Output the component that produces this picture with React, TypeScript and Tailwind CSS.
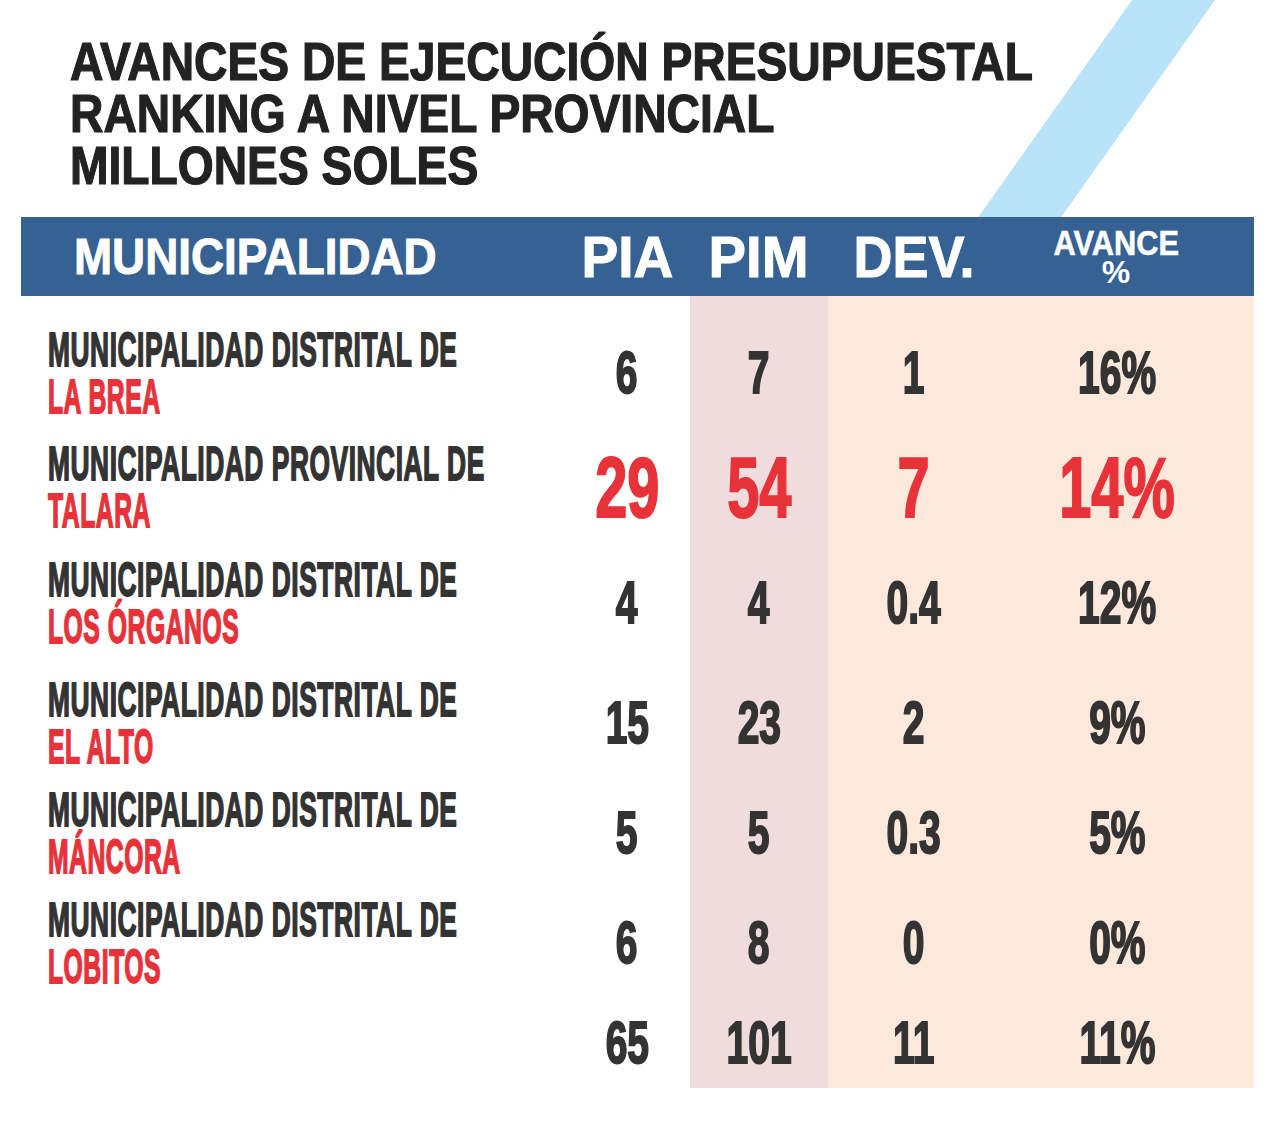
import React from "react";

type Row = {
  top: string;
  name: string;
  pia: string;
  pim: string;
  dev: string;
  av: string;
  big?: boolean;
};

const rows: Row[] = [
  { top: "MUNICIPALIDAD DISTRITAL DE", name: "LA BREA", pia: "6", pim: "7", dev: "1", av: "16%" },
  { top: "MUNICIPALIDAD PROVINCIAL DE", name: "TALARA", pia: "29", pim: "54", dev: "7", av: "14%", big: true },
  { top: "MUNICIPALIDAD DISTRITAL DE", name: "LOS ÓRGANOS", pia: "4", pim: "4", dev: "0.4", av: "12%" },
  { top: "MUNICIPALIDAD DISTRITAL DE", name: "EL ALTO", pia: "15", pim: "23", dev: "2", av: "9%" },
  { top: "MUNICIPALIDAD DISTRITAL DE", name: "MÁNCORA", pia: "5", pim: "5", dev: "0.3", av: "5%" },
  { top: "MUNICIPALIDAD DISTRITAL DE", name: "LOBITOS", pia: "6", pim: "8", dev: "0", av: "0%" },
];

const total = { pia: "65", pim: "101", dev: "11", av: "11%" };

const heights = ["h-[114px]", "h-[114px]", "h-[118px]", "h-[122px]", "h-[98px]", "h-[122px]"];

function Num({ value, big }: { value: string; big?: boolean }) {
  if (big) {
    return (
      <span className="inline-block whitespace-nowrap text-[85px] leading-[85px] font-bold text-[#e8323a] scale-x-[0.68] origin-center [-webkit-text-stroke:2px_currentColor]">
        {value}
      </span>
    );
  }
  return (
    <span className="inline-block whitespace-nowrap text-[60px] leading-[60px] font-bold text-[#333333] scale-x-[0.65] origin-center [-webkit-text-stroke:2px_currentColor]">
      {value}
    </span>
  );
}

function NumCell({ h, value, big }: { h: string; value: string; big?: boolean }) {
  return (
    <div className={`${h} flex items-center justify-center`}>
      <Num value={value} big={big} />
    </div>
  );
}

function NumColumn({
  field,
  bg,
  pad,
}: {
  field: "pia" | "pim" | "dev" | "av";
  bg: string;
  pad?: string;
}) {
  return (
    <div className={`flex flex-col pt-[20px] pb-[6px] ${bg} ${pad ?? ""}`}>
      {rows.map((r, i) => (
        <NumCell key={i} h={heights[i]} value={r[field]} big={r.big} />
      ))}
      <NumCell h="h-[78px]" value={total[field]} />
    </div>
  );
}

export default function App() {
  return (
    <div className="relative w-[1280px] h-[1121px] bg-white overflow-hidden font-['Liberation_Sans',Arial,sans-serif]">
      {/* decorative stripe */}
      <svg
        className="absolute left-0 top-0 z-0"
        width="1280"
        height="260"
        viewBox="0 0 1280 260"
      >
        <polygon points="1132,0 1215,0 1045,240 962,240" fill="#b8e3f8" />
      </svg>

      {/* title */}
      <div className="relative z-10 pl-[70px] pt-[36px]">
        <div className="inline-block whitespace-nowrap origin-top-left scale-x-[0.872] text-[53px] leading-[52px] font-bold text-[#222222] [-webkit-text-stroke:1.2px_currentColor]">
          <div>AVANCES DE EJECUCIÓN PRESUPUESTAL</div>
          <div>RANKING A NIVEL PROVINCIAL</div>
          <div>MILLONES SOLES</div>
        </div>
      </div>

      {/* header bar */}
      <div className="relative z-10 mt-[25px] ml-[21px] w-[1233px] h-[79px] bg-[#356193] grid grid-cols-[543px_126px_138px_172px_254px] items-center text-white font-bold">
        <div className="pl-[53px]">
          <span className="inline-block whitespace-nowrap origin-left scale-x-[0.915] text-[50px] leading-[50px] [-webkit-text-stroke:1px_currentColor]">
            MUNICIPALIDAD
          </span>
        </div>
        <div className="flex justify-center">
          <span className="inline-block whitespace-nowrap origin-center scale-x-[0.95] text-[58px] leading-[58px] [-webkit-text-stroke:1px_currentColor]">
            PIA
          </span>
        </div>
        <div className="flex justify-center">
          <span className="inline-block whitespace-nowrap origin-center scale-x-[0.97] text-[58px] leading-[58px] [-webkit-text-stroke:1px_currentColor]">
            PIM
          </span>
        </div>
        <div className="flex justify-center">
          <span className="inline-block whitespace-nowrap origin-center scale-x-[0.93] text-[58px] leading-[58px] [-webkit-text-stroke:1px_currentColor]">
            DEV.
          </span>
        </div>
        <div className="flex flex-col items-center pr-[22px]">
          <span className="inline-block whitespace-nowrap origin-center scale-x-[0.88] text-[35px] leading-[30px] [-webkit-text-stroke:0.6px_currentColor]">
            AVANCE
          </span>
          <span className="inline-block whitespace-nowrap text-[32px] leading-[28px]">%</span>
        </div>
      </div>

      {/* body */}
      <div className="relative z-10 ml-[21px] w-[1233px] flex">
        <div className="w-[543px] flex flex-col pt-[20px] pb-[6px]">
          {rows.map((r, i) => (
            <div key={i} className={`${heights[i]} flex flex-col justify-center pl-[27px]`}>
              <span className="block whitespace-nowrap origin-left scale-x-[0.538] tracking-[1px] text-[49px] leading-[47px] font-bold text-[#333333] [-webkit-text-stroke:1.8px_currentColor]">
                {r.top}
              </span>
              <span className="block whitespace-nowrap origin-left scale-x-[0.505] tracking-[1px] text-[49px] leading-[47px] font-bold text-[#e8323a] [-webkit-text-stroke:1.8px_currentColor]">
                {r.name}
              </span>
            </div>
          ))}
          <div className="h-[78px]" />
        </div>
        <div className="w-[126px]">
          <NumColumn field="pia" bg="bg-white" />
        </div>
        <div className="w-[138px]">
          <NumColumn field="pim" bg="bg-[#f0dcdd]" />
        </div>
        <div className="w-[172px]">
          <NumColumn field="dev" bg="bg-[#fde9dc]" />
        </div>
        <div className="w-[254px]">
          <NumColumn field="av" bg="bg-[#fde9dc]" pad="pr-[20px]" />
        </div>
      </div>
    </div>
  );
}
